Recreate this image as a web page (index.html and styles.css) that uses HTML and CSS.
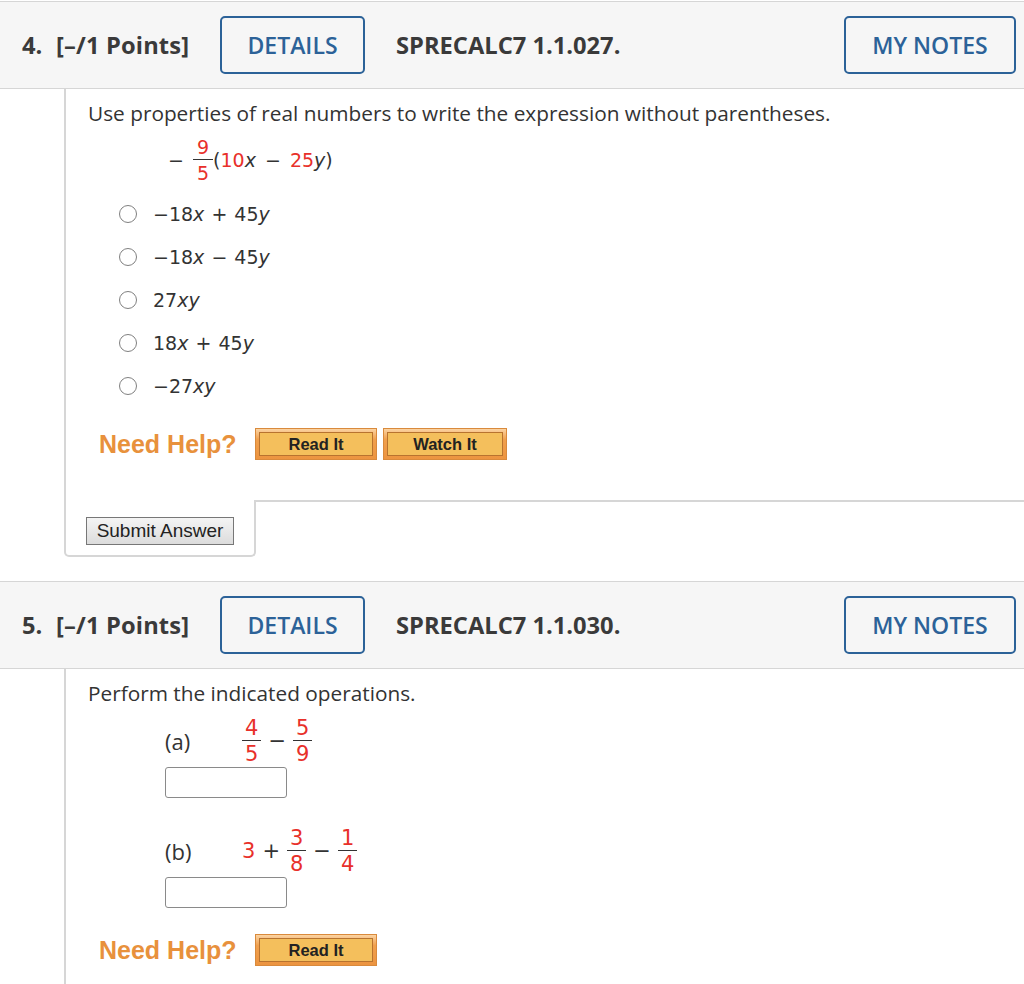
FILE: index.html
```html
<!DOCTYPE html>
<html>
<head>
<meta charset="utf-8">
<link rel="stylesheet" href="styles.css">
</head>
<body>
<section class="question">
  <div class="qhead">
    <span class="qnum">4.</span>
    <span class="points">[–/1 Points]</span>
    <span class="obtn details">DETAILS</span>
    <span class="code">SPRECALC7 1.1.027.</span>
    <span class="obtn notes">MY NOTES</span>
  </div>
  <div class="qbody q1">
    <p class="prompt">Use properties of real numbers to write the expression without parentheses.</p>
    <div class="expr math">
      <span class="op">−</span>
      <span class="frac"><span class="num red">9</span><span class="den red">5</span></span><span>(<span class="red">10</span><i>x</i> − <span class="red">25</span><i>y</i>)</span>
    </div>
    <div class="options math">
      <div class="opt"><span class="radio"></span><span>−18<i>x</i> + 45<i>y</i></span></div>
      <div class="opt"><span class="radio"></span><span>−18<i>x</i> − 45<i>y</i></span></div>
      <div class="opt"><span class="radio"></span><span>27<i>xy</i></span></div>
      <div class="opt"><span class="radio"></span><span>18<i>x</i> + 45<i>y</i></span></div>
      <div class="opt"><span class="radio"></span><span>−27<i>xy</i></span></div>
    </div>
    <div class="help">
      <span class="helplabel">Need Help?</span>
      <span class="helpbtn"><span>Read It</span></span>
      <span class="helpbtn watch"><span>Watch It</span></span>
    </div>
  </div>
  <div class="footer">
    <div class="tab"><span class="submit">Submit Answer</span></div>
    <div class="filler"></div>
  </div>
</section>

<section class="question second">
  <div class="qhead">
    <span class="qnum">5.</span>
    <span class="points">[–/1 Points]</span>
    <span class="obtn details">DETAILS</span>
    <span class="code">SPRECALC7 1.1.030.</span>
    <span class="obtn notes">MY NOTES</span>
  </div>
  <div class="qbody q2">
    <p class="prompt">Perform the indicated operations.</p>
    <div class="part parta">
      <span class="plabel">(a)</span>
      <span class="math big red">
        <span class="frac"><span class="num">4</span><span class="den">5</span></span>
        <span class="op dark">−</span>
        <span class="frac"><span class="num">5</span><span class="den">9</span></span>
      </span>
    </div>
    <div class="answer"></div>
    <div class="part partb">
      <span class="plabel">(b)</span>
      <span class="math big red">
        <span>3</span>
        <span class="op dark">+</span>
        <span class="frac"><span class="num">3</span><span class="den">8</span></span>
        <span class="op dark">−</span>
        <span class="frac"><span class="num">1</span><span class="den">4</span></span>
      </span>
    </div>
    <div class="answer"></div>
    <div class="help help2">
      <span class="helplabel">Need Help?</span>
      <span class="helpbtn"><span>Read It</span></span>
    </div>
  </div>
</section>
</body>
</html>
```
FILE: styles.css
```css
* { box-sizing: border-box; }
body {
  margin: 0;
  padding-top: 1px;
  font-family: "Open Sans", "DejaVu Sans", sans-serif;
  color: #333;
  background: #fff;
}
.qhead {
  display: flex;
  align-items: center;
  height: 88px;
  background: #f6f6f6;
  border-top: 1px solid #d6d6d6;
  border-bottom: 1px solid #d6d6d6;
  padding: 0 8px 0 22px;
  font-size: 23.7px;
  font-weight: 700;
  color: #3a3a3a;
}
.qnum { width: 34px; }
.points { width: 164px; letter-spacing: 0.15px; }
.obtn {
  display: flex;
  align-items: center;
  justify-content: center;
  height: 58px;
  border: 2px solid #2c6298;
  border-radius: 5px;
  color: #2c6298;
  font-weight: 600;
  font-size: 23px;
}
.details { width: 145px; }
.code { margin-left: 31px; }
.notes { margin-left: auto; width: 172px; }

.qbody {
  margin-left: 64px;
  border-left: 2px solid #d6d6d6;
  padding: 10px 0 0 22px;
}
.q1 { padding-bottom: 38px; }
.prompt {
  margin: 0;
  font-size: 20.8px;
  line-height: 28px;
  color: #333;
}
.math {
  font-family: "DejaVu Sans", Verdana, sans-serif;
  font-size: 19px;
  word-spacing: 1px;
  color: #333;
}
.math i { font-style: italic; }
.red { color: #e8302a; }
.dark { color: #333; }
.expr {
  display: flex;
  align-items: center;
  height: 48px;
  margin: 9px 0 0 80px;
  white-space: pre;
  word-spacing: 3px;
}
.expr .op { margin-right: 9px; }
.frac {
  display: inline-flex;
  flex-direction: column;
  align-items: center;
  vertical-align: middle;
}
.frac .num {
  display: block;
  padding: 0 4px 2px;
  border-bottom: 1.5px solid #333;
  line-height: 19px;
}
.frac .den {
  display: block;
  padding-top: 4px;
  line-height: 19px;
}
.options { margin-top: 8px; }
.opt {
  display: flex;
  align-items: center;
  height: 43px;
  padding-left: 31px;
}
.radio {
  width: 18px;
  height: 18px;
  border: 1.6px solid #808080;
  border-radius: 50%;
  background: #fff;
  margin-right: 16px;
  flex: none;
}
.help {
  display: flex;
  align-items: center;
  height: 36px;
  margin: 19px 0 0 11px;
}
.helplabel {
  width: 156px;
  font-family: "Liberation Sans", Arial, sans-serif;
  font-weight: 700;
  font-size: 25px;
  color: #e8913c;
}
.helpbtn {
  display: flex;
  width: 122px;
  height: 32px;
  padding: 3px;
  border: 1px solid #d98a3c;
  background: linear-gradient(#fbd3a2, #f0a04e 35%, #ec9440);
}
.helpbtn span {
  flex: 1;
  display: flex;
  align-items: center;
  justify-content: center;
  border: 1px solid #b8732f;
  background: #f4bf5c;
  font-family: "Liberation Sans", Arial, sans-serif;
  font-weight: 700;
  font-size: 16.5px;
  color: #222;
}
.watch { margin-left: 6px; width: 124px; }

.footer {
  display: flex;
  margin-left: 64px;
}
.tab {
  width: 192px;
  border-left: 2px solid #d6d6d6;
  border-right: 2px solid #d6d6d6;
  border-bottom: 2px solid #d6d6d6;
  border-radius: 0 0 5px 5px;
  padding: 17px 0 10px 20px;
}
.submit {
  display: flex;
  align-items: center;
  justify-content: center;
  width: 148px;
  height: 28px;
  border: 1px solid #777;
  background: linear-gradient(#f4f4f4, #dcdcdc);
  font-family: "Liberation Sans", Arial, sans-serif;
  font-size: 19px;
  color: #222;
}
.filler {
  flex: 1;
  border-top: 2px solid #d6d6d6;
}

.second { margin-top: 24px; }
.q2 { padding-bottom: 20px; }
.part {
  display: flex;
  align-items: center;
  height: 46px;
  margin-left: 77px;
}
.parta { margin-top: 11px; }
.partb { margin-top: 30px; }
.plabel {
  width: 77px;
  font-size: 22px;
  color: #333;
}
.big {
  display: flex;
  align-items: center;
  font-size: 21px;
  white-space: pre;
  word-spacing: 0;
}
.big .op { margin: 0 7px; }
.big .frac .num { padding: 0 3px 2px; line-height: 20px; }
.big .frac .den { padding-top: 3px; line-height: 20px; }
.answer {
  width: 122px;
  height: 31px;
  margin: 3px 0 0 77px;
  border: 1px solid #8a8a8a;
  border-radius: 3px;
  background: #fff;
}
.partb + .answer { margin-top: 3px; }
.help2 { margin-top: 24px; }
```
